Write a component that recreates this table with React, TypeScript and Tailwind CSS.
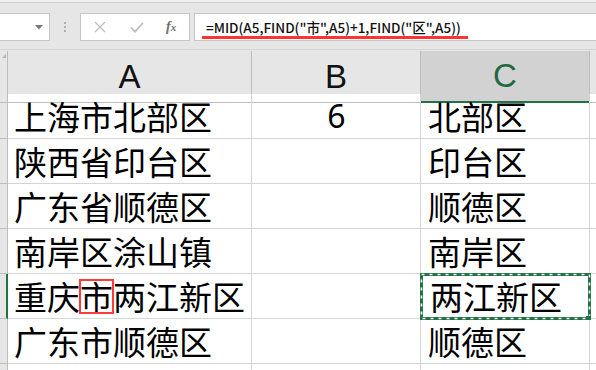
import React from "react";

const cjk = "font-['Noto_Sans_CJK_SC','Noto_Sans',sans-serif]";

const rows: { a: React.ReactNode; b?: string; c: string; active?: boolean }[] = [
  { a: "上海市北部区", b: "6", c: "北部区" },
  { a: "陕西省印台区", c: "印台区" },
  { a: "广东省顺德区", c: "顺德区" },
  { a: "南岸区涂山镇", c: "南岸区" },
  {
    a: (
      <>
        重庆
        <span className="outline-2 outline-[#ff3b3b] -outline-offset-1">市</span>
        两江新区
      </>
    ),
    c: "两江新区",
    active: true,
  },
  { a: "广东市顺德区", c: "顺德区" },
  { a: "", c: "" },
];

// copy marquee around the active cell
function CopyMarquee() {
  return (
    <svg className="absolute -left-px -top-px z-10" width="171" height="47" viewBox="0 0 171 47">
      <rect x="1.5" y="1.5" width="168" height="44" fill="none" stroke="#217346" strokeWidth="3" />
      <rect x="1.5" y="1.5" width="168" height="44" fill="none" stroke="#ffffff" strokeWidth="1.6" strokeDasharray="3 5" />
      <rect x="166" y="43" width="5" height="4" fill="#217346" />
    </svg>
  );
}

function FormulaBar() {
  return (
    <div className="h-[51px] bg-[#e6e6e6] flex flex-col">
      <div className="h-[3px] bg-[#efefef] border-b border-[#cfcfcf]" />
      <div className="flex items-start pt-[10px] h-[47px] border-b border-[#d6d6d6]">
        {/* name box */}
        <div className="w-[50px] h-[28px] bg-white border border-l-0 border-[#c6c6c6] flex items-center justify-end pr-[6px]">
          <svg width="8" height="5" viewBox="0 0 8 5">
            <path d="M0 0h8L4 4.5z" fill="#7a7a7a" />
          </svg>
        </div>
        <div className="w-[30px] h-[28px] flex flex-col items-center justify-center gap-[2px]">
          <span className="w-[2px] h-[2px] bg-[#b0b0b0]" />
          <span className="w-[2px] h-[2px] bg-[#b0b0b0]" />
          <span className="w-[2px] h-[2px] bg-[#b0b0b0]" />
        </div>
        {/* cancel / enter / function */}
        <div className="w-[110px] h-[28px] bg-white border border-[#c6c6c6] flex items-center">
          <svg className="ml-[13px]" width="12" height="12" viewBox="0 0 12 12">
            <path d="M1 1l10 10M11 1L1 11" stroke="#bdbdbd" strokeWidth="1.3" fill="none" />
          </svg>
          <svg className="ml-[24px]" width="14" height="11" viewBox="0 0 14 11">
            <path d="M1 5.5l4 4.2L13 1" stroke="#bdbdbd" strokeWidth="1.8" fill="none" />
          </svg>
          <span className="ml-[22px] font-['Liberation_Serif',serif] italic text-[14px] text-[#707070] font-bold leading-none">
            f<span className="text-[11px]">x</span>
          </span>
        </div>
        <div className="w-[4px]" />
        <div className="flex-1 h-[28px] bg-white border border-r-0 border-[#c6c6c6] relative">
          <div className={`${cjk} pl-[11px] text-[13.5px] leading-[26px] font-medium text-[#111]`}>
            =MID(A5,FIND("市",A5)+1,FIND("区",A5))
          </div>
          <div className="absolute left-[7px] top-[22px] w-[266px] h-[3px] bg-[#ff3333]" />
        </div>
      </div>
    </div>
  );
}

export default function App() {
  const cols = "grid grid-cols-[8px_244px_169px_169px_1fr]";
  return (
    <div className="w-[596px] h-[370px] overflow-hidden bg-white">
      <FormulaBar />
      {/* column headings */}
      <div className={`${cols} h-[43px] bg-[#e6e6e6] font-['Liberation_Sans',sans-serif] text-[33px] text-[#111]`}>
        <div className="border-r border-b border-[#bdbdbd] relative">
          <svg className="absolute right-[1px] top-[3px]" width="4" height="4" viewBox="0 0 4 4">
            <path d="M4 0v4H0z" fill="#b5b5b5" />
          </svg>
        </div>
        <div className="border-r border-b border-[#bdbdbd] flex items-center justify-center">A</div>
        <div className="border-r border-b border-[#bdbdbd] flex items-center justify-center">B</div>
        <div className="bg-[#d2d2d2] border-r border-[#bdbdbd] border-b-2 border-b-[#217346] flex items-center justify-center text-[#1e6b40]">
          C
        </div>
        <div className="border-b border-[#bdbdbd]" />
      </div>
      {rows.map((r, i) => (
        <div key={i} className={`${cols} h-[45px] ${cjk} text-[33px] leading-none text-black`}>
          <div className={`bg-[#e6e6e6] border-b border-[#bdbdbd] ${r.active ? "border-r-2 border-r-[#217346]" : "border-r border-r-[#bdbdbd]"}`} />
          <div className="border-r border-b border-[#d4d4d4] flex items-center pl-[6px] whitespace-nowrap">{r.a}</div>
          <div className="border-r border-b border-[#d4d4d4] flex items-center justify-center pl-[1px] font-['Noto_Sans',sans-serif] text-[32px]">
            {r.b}
          </div>
          <div className="border-r border-b border-[#d4d4d4] flex items-center pl-[7px] relative">
            {r.active && <CopyMarquee />}
            <span className={r.active ? "pl-[2px]" : ""}>{r.c}</span>
          </div>
          <div className="border-b border-[#d4d4d4]" />
        </div>
      ))}
    </div>
  );
}
